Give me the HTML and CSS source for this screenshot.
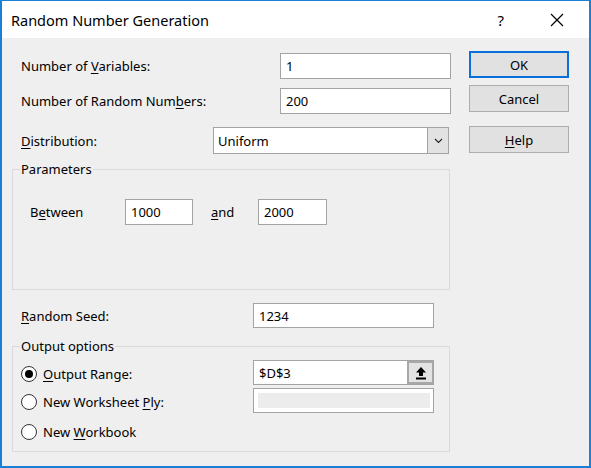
FILE: index.html
```html
<!DOCTYPE html>
<html lang="en">
<head>
<meta charset="utf-8">
<title>Random Number Generation</title>
<link rel="stylesheet" href="styles.css">
</head>
<body>
<div class="dialog">
  <div class="titlebar">
    <span class="title">Random Number Generation</span>
    <span class="q">?</span>
    <svg class="close" width="14" height="14" viewBox="0 0 14 14"><path d="M1 1L13 13M13 1L1 13" stroke="#000" stroke-width="1.2" fill="none"/></svg>
  </div>
  <div class="content">
    <div class="left">
      <div class="row r1">
        <span class="lbl w-long">Number of <u>V</u>ariables:</span>
        <div class="field w-vars">1</div>
      </div>
      <div class="row r2">
        <span class="lbl w-long">Number of Random Num<u>b</u>ers:</span>
        <div class="field w-vars">200</div>
      </div>
      <div class="row r3">
        <span class="lbl w-dist"><u>D</u>istribution:</span>
        <div class="field select">
          <span class="sel-text">Uniform</span>
          <span class="sel-btn"><svg width="9" height="6" viewBox="0 0 9 6"><path d="M1 1L4.5 4.5L8 1" stroke="#222" stroke-width="1.1" fill="none"/></svg></span>
        </div>
      </div>
      <fieldset class="group params">
        <legend>Parameters</legend>
        <div class="row between">
          <span class="lbl w-between">B<u>e</u>tween</span>
          <div class="field w-p1">1000</div>
          <span class="lbl w-and"><u>a</u>nd</span>
          <div class="field w-p2">2000</div>
        </div>
      </fieldset>
      <div class="row seed">
        <span class="lbl w-seed"><u>R</u>andom Seed:</span>
        <div class="field w-seedf">1234</div>
      </div>
      <fieldset class="group output">
        <legend>Output options</legend>
        <div class="row opt opt-a">
          <span class="radio-wrap"><span class="radio checked"></span><span class="lbl"><u>O</u>utput Range:</span></span>
          <div class="field range">
            <span class="range-text">$D$3</span>
            <span class="range-btn"><svg width="12" height="14" viewBox="0 0 12 14"><path d="M6 1L11 6.5H8V10H4V6.5H1Z" fill="#000"/><rect x="1" y="11.5" width="10" height="2" fill="#000"/></svg></span>
          </div>
        </div>
        <div class="row opt opt-b">
          <span class="radio-wrap"><span class="radio"></span><span class="lbl">New Worksheet <u>P</u>ly:</span></span>
          <div class="field disabled"><span class="dis-inner"></span></div>
        </div>
        <div class="row opt opt-c">
          <span class="radio-wrap"><span class="radio"></span><span class="lbl">New <u>W</u>orkbook</span></span>
        </div>
      </fieldset>
    </div>
    <div class="buttons">
      <div class="btn default">OK</div>
      <div class="btn cancel">Cancel</div>
      <div class="btn help"><u>H</u>elp</div>
    </div>
  </div>
</div>
</body>
</html>
```
FILE: styles.css
```css
* { box-sizing: border-box; }
body {
  margin: 0;
  font-family: "Noto Sans", "Open Sans", sans-serif;
  font-size: 13px;
  color: #000;
}
u { text-decoration-thickness: 1px; text-underline-offset: 2px; }
.dialog {
  width: 591px;
  height: 468px;
  border: 2px solid #1a7fd6;
  border-top-width: 1px;
  background: #efefef;
  display: flex;
  flex-direction: column;
}
.titlebar {
  height: 37px;
  background: #fff;
  display: flex;
  align-items: center;
  padding: 0 25px 0 9px;
}
.title { flex: 1; font-size: 14.5px; }
.q { font-size: 15px; margin-right: 46px; }
.close { display: block; }

.content {
  display: flex;
  padding: 13px 0 0 10px;
}
.left { width: 439px; padding-top: 2px; }
.row { display: flex; align-items: center; }
.lbl { white-space: nowrap; }
.r1, .r2, .r3, .seed { padding-left: 9px; }
.r1 { height: 26px; }
.r2 { height: 26px; margin-top: 9px; }
.r3 { height: 27px; margin-top: 13px; }
.w-long { width: 259px; }
.w-dist { width: 192px; }
.w-seed { width: 232px; }

.field {
  height: 100%;
  border: 1px solid #a3a3a3;
  background: #fff;
  display: flex;
  align-items: center;
  padding-left: 5px;
}
.w-vars { width: 171px; }
.select { width: 236px; padding-left: 4px; }
.sel-text { flex: 1; }
.sel-btn {
  width: 21px;
  height: 100%;
  background: #e2e2e2;
  border-left: 1px solid #a3a3a3;
  display: flex;
  align-items: center;
  justify-content: center;
}
.sel-btn svg { display: block; }

.group {
  margin: 0;
  padding: 0;
  width: 438px;
  border: 1px solid #dadada;
  min-inline-size: 0;
}
.group legend {
  padding: 0 1px;
  margin-left: 7px;
  line-height: 16px;
  height: 16px;
}
.params { margin-top: 7px; padding-bottom: 64px; }
.between { height: 26px; margin-top: 22px; padding-left: 17px; }
.w-between { width: 95px; }
.w-p1 { width: 68px; }
.w-and { width: 47px; margin-left: 18px; }
.w-p2 { width: 69px; }

.seed { height: 25px; margin-top: 13px; }
.w-seedf { width: 181px; }

.output { margin-top: 10px; padding-bottom: 7px; }
.opt { padding-left: 8px; }
.opt-a { height: 25px; margin-top: 6px; }
.opt-b { height: 25px; margin-top: 3px; }
.opt-c { height: 24px; margin-top: 7px; }
.radio-wrap {
  width: 232px;
  display: flex;
  align-items: center;
  padding-top: 3px;
}
.opt-c .radio-wrap { padding-top: 0; }
.radio {
  width: 16px;
  height: 16px;
  border: 1.5px solid #333;
  border-radius: 50%;
  background: #fff;
  margin-right: 6px;
  display: flex;
  align-items: center;
  justify-content: center;
  flex: none;
}
.radio.checked::after {
  content: "";
  width: 8px;
  height: 8px;
  border-radius: 50%;
  background: #000;
}
.range { width: 181px; padding-right: 0; }
.range-text { flex: 1; }
.range-btn {
  width: 26px;
  height: 100%;
  background: #e3e3e3;
  border: 2px solid #a8a8a8;
  border-right-width: 1px;
  display: flex;
  align-items: center;
  justify-content: center;
}
.range-btn svg { display: block; }
.disabled { width: 181px; padding: 4px 3px 4px 4px; }
.dis-inner { display: block; width: 100%; height: 100%; background: #ececec; }

.buttons { width: 100px; margin-left: 18px; }
.btn {
  height: 27px;
  border: 1px solid #adadad;
  background: #e1e1e1;
  display: flex;
  align-items: center;
  justify-content: center;
}
.btn.default { border: 2px solid #0a6fd8; }
.cancel { margin-top: 7px; }
.help { margin-top: 14px; }
```
